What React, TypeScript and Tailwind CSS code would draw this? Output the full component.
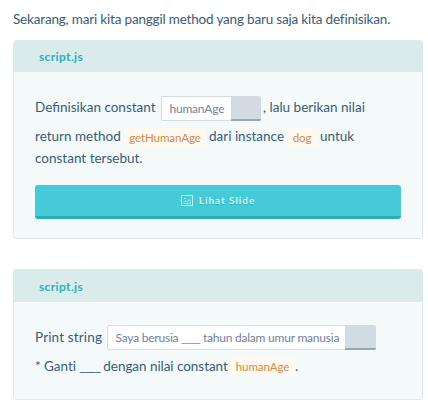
import type { ReactNode } from "react";

function Card({ bodyClass, headClass, children }: { bodyClass: string; headClass: string; children: ReactNode }) {
  return (
    <section className="w-[410px] overflow-hidden rounded-[3px] border border-[#d9ebea] bg-[#f4fafa]">
      <header className={"bg-[#d9ebea] pl-[25px] text-[12px] font-bold tracking-[0.35px] text-[#2bb1bc] " + headClass}>
        script.js
      </header>
      <div className={"pl-[21px] pr-[21px] " + bodyClass}>{children}</div>
    </section>
  );
}

function CopyField({ children, className, buttonClass }: { children: ReactNode; className: string; buttonClass: string }) {
  return (
    <span className={"flex h-[25px] shrink-0 overflow-hidden rounded-[2px] " + className}>
      <span className="min-w-0 flex-1 rounded-l-[2px] border border-r-0 border-[#d2dae2] bg-white pl-[7.5px] text-[12px] leading-[23px] tracking-[-0.22px] text-[#71819a]">
        {children}
      </span>
      <span className={"shrink-0 border-b-2 border-[#98a5b9] bg-[#d2dae2] " + buttonClass} />
    </span>
  );
}

function Code({ children, className }: { children: string; className: string }) {
  return (
    <code
      className={
        "h-[19px] shrink-0 rounded-[3px] bg-[#fff9ef] text-center font-['Lato','Noto_Sans',sans-serif] text-[11.5px] leading-[20px] tracking-[-0.08px] text-[#cf8b4c] " +
        className
      }
    >
      {children}
    </code>
  );
}

export default function App() {
  return (
    <main className="h-[415px] w-[428px] overflow-hidden whitespace-nowrap bg-white pl-[13px] font-['Lato','Noto_Sans',sans-serif] text-[13.5px] tracking-[0px] text-[#3a5b78]">
      <p className="h-[40px] pt-[9px] leading-[20px] tracking-[-0.18px]">Sekarang, mari kita panggil method yang baru saja kita definisikan.</p>

      <Card headClass="h-[31px] leading-[32px]" bodyClass="h-[166px] pt-[24px]">
        <div className="flex h-[25px] leading-[23px]">
          <span className="w-[126px]">Definisikan constant</span>
          <CopyField className="w-[100px]" buttonClass="w-[30px]">humanAge</CopyField>
          <span className="pl-[2px]">, lalu berikan nilai</span>
        </div>
        <div className="mt-[7px] flex h-[19px] leading-[17px]">
          <span className="w-[89px]">return method</span>
          <Code className="w-[82px]">getHumanAge</Code>
          <span className="w-[81px] pl-[3px]">dari instance</span>
          <Code className="w-[30px]">dog</Code>
          <span className="pl-[3px]">untuk</span>
        </div>
        <p className="mt-[2px] h-[20px] leading-[18px]">constant tersebut.</p>
        <button className="mt-[16px] flex h-[34px] w-[366px] items-center justify-center gap-[6px] rounded-[3px] border-b-[3px] border-[#25b0bb] bg-[#45cbd8] text-[10px] font-bold tracking-[0.95px] text-[#dcf6f7] [text-shadow:0_1px_1px_#2faeba]">
          <svg width="12" height="11" viewBox="0 0 12 11" fill="none" stroke="#c1eff1">
            <rect x=".5" y=".5" width="11" height="10" />
            <path d="M3 8.5v-1l2-2 1.5 1.5L8 4.5l1.5 2v2z" strokeWidth=".8" />
            <path d="M3 3.5h1.5" />
          </svg>
          Lihat Slide
        </button>
      </Card>

      <div className="h-[30px]" />

      <Card headClass="h-[32px] leading-[34px]" bodyClass="h-[97px] pt-[23px]">
        <div className="flex h-[25px] leading-[25px]">
          <span className="w-[72px] tracking-[0.15px]">Print string</span>
          <CopyField className="w-[269px]" buttonClass="w-[31px]">
            Saya berusia <span className="tracking-[-0.8px]">____</span> tahun dalam umur manusia
          </CopyField>
        </div>
        <div className="mt-[7px] flex h-[19px] leading-[18px]">
          <span className="w-[195px] tracking-[-0.05px]">* Ganti <span className="tracking-[-1.05px]">____</span> dengan nilai constant</span>
          <Code className="w-[65px]">humanAge</Code>
          <span>.</span>
        </div>
      </Card>
    </main>
  );
}
